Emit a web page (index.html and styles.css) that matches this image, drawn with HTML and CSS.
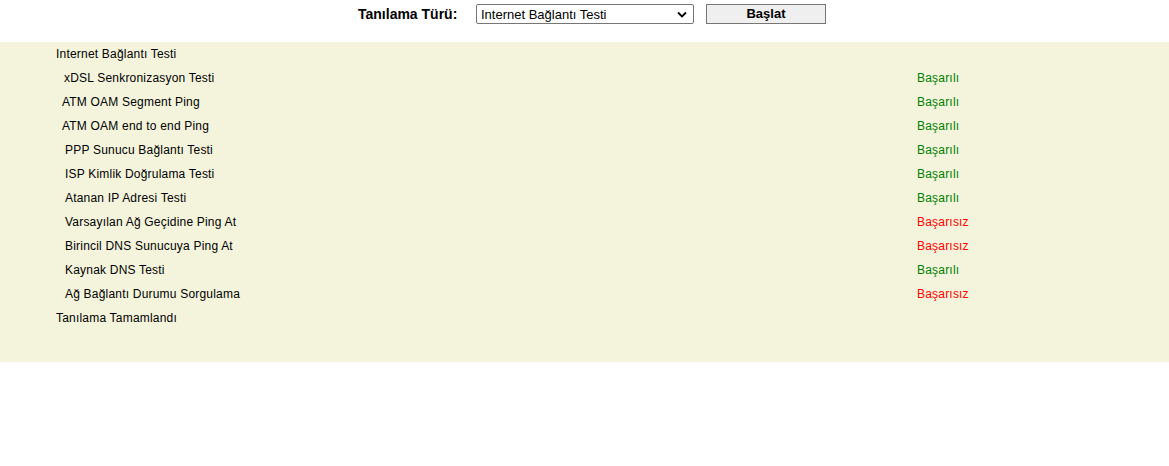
FILE: index.html
```html
<!DOCTYPE html>
<html>
<head>
<meta charset="utf-8">
<link rel="stylesheet" href="styles.css">
</head>
<body>
<div class="toolbar">
  <span class="label">Tanılama Türü:</span>
  <div class="select"><span>Internet Bağlantı Testi</span><svg class="chev" width="10" height="7" viewBox="0 0 10 7"><path d="M1 1.5 L5 5.5 L9 1.5" fill="none" stroke="#000" stroke-width="1.8"/></svg></div>
  <div class="button">Başlat</div>
</div>
<div class="panel">
  <div class="row"><span class="name head">Internet Bağlantı Testi</span><span></span></div>
  <div class="row"><span class="name ind-a">xDSL Senkronizasyon Testi</span><span class="ok">Başarılı</span></div>
  <div class="row"><span class="name ind-b">ATM OAM Segment Ping</span><span class="ok">Başarılı</span></div>
  <div class="row"><span class="name ind-b">ATM OAM end to end Ping</span><span class="ok">Başarılı</span></div>
  <div class="row"><span class="name ind-c">PPP Sunucu Bağlantı Testi</span><span class="ok">Başarılı</span></div>
  <div class="row"><span class="name ind-c">ISP Kimlik Doğrulama Testi</span><span class="ok">Başarılı</span></div>
  <div class="row"><span class="name ind-c">Atanan IP Adresi Testi</span><span class="ok">Başarılı</span></div>
  <div class="row"><span class="name ind-c">Varsayılan Ağ Geçidine Ping At</span><span class="fail">Başarısız</span></div>
  <div class="row"><span class="name ind-c">Birincil DNS Sunucuya Ping At</span><span class="fail">Başarısız</span></div>
  <div class="row"><span class="name ind-c">Kaynak DNS Testi</span><span class="ok">Başarılı</span></div>
  <div class="row"><span class="name ind-c">Ağ Bağlantı Durumu Sorgulama</span><span class="fail">Başarısız</span></div>
  <div class="row"><span class="name head">Tanılama Tamamlandı</span><span></span></div>
</div>
</body>
</html>
```
FILE: styles.css
```css
html, body {
  margin: 0;
  padding: 0;
  background: #fff;
  font-family: "Liberation Sans", Arial, sans-serif;
  font-size: 12px;
  color: #000;
}
.toolbar {
  height: 42px;
  display: flex;
  align-items: flex-start;
  padding-left: 358px;
  padding-top: 4px;
  box-sizing: border-box;
}
.label {
  font-weight: bold;
  font-size: 14px;
  line-height: 20px;
  width: 100px;
  margin-right: 18px;
  white-space: nowrap;
}
.select {
  width: 218px;
  height: 20px;
  box-sizing: border-box;
  border: 1px solid #767676;
  border-radius: 2px;
  background: #fff;
  display: flex;
  align-items: center;
  justify-content: space-between;
  padding: 0 6px 0 4px;
  font-size: 13px;
  margin-right: 12px;
}
.chev { display: block; }
.button {
  width: 120px;
  height: 20px;
  box-sizing: border-box;
  border: 1px solid #767676;
  background: #efefef;
  font-weight: bold;
  font-size: 13px;
  line-height: 18px;
  text-align: center;
}
.panel {
  background: #f4f4dc;
  height: 320px;
  padding-left: 56px;
  box-sizing: border-box;
}
.row {
  display: grid;
  grid-template-columns: 861px auto;
  height: 24px;
  line-height: 24px;
  letter-spacing: 0.2px;
}
.ind-a { padding-left: 8px; }
.ind-b { padding-left: 6px; }
.ind-c { padding-left: 9px; }
.ok { color: #008000; }
.fail { color: #ff0000; }
```
